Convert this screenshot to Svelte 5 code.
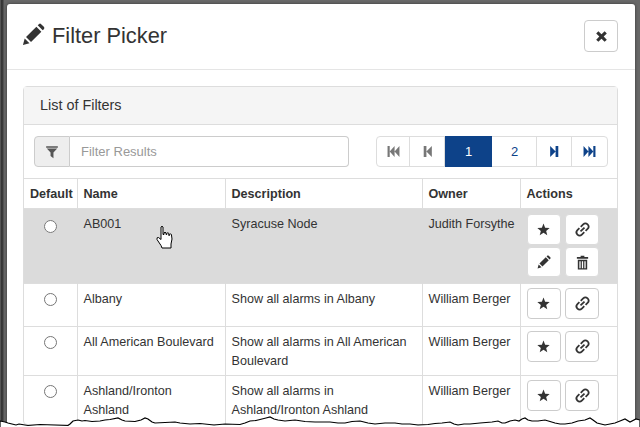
<script>
  const rows = [
    { name: 'AB001', desc: 'Syracuse Node', owner: 'Judith Forsythe', mine: true },
    { name: 'Albany', desc: 'Show all alarms in Albany', owner: 'William Berger' },
    { name: 'All American Boulevard', desc: 'Show all alarms in All American Boulevard', owner: 'William Berger' },
    { name: 'Ashland/Ironton Ashland', desc: 'Show all alarms in Ashland/Ironton Ashland', owner: 'William Berger' }
  ];

  const icons = {
    pencil: 'M1 23L2.8 16.2L7.8 21.2ZM4.2 14.6L15 3.8L20.2 9L9.4 19.8ZM16.4 2.4L17.6 1.2Q18.8 0 20 1.2L22.8 4Q24 5.2 22.8 6.4L21.6 7.6Z',
    filter: 'M2 2H22V4.5H2ZM3 6H21L14.5 13V22.5L9.5 19V13Z',
    close: 'M3.5 7L7 3.5L12 8.5L17 3.5L20.5 7L15.5 12L20.5 17L17 20.5L12 15.5L7 20.5L3.5 17L8.5 12Z',
    first: 'M1 2H5V22H1ZM5 12L14 2V22ZM14 12L23 2V22Z',
    prev: 'M5 2H10V22H5ZM10 12L20 2V22Z',
    next: 'M19 2H14V22H19ZM14 12L4 2V22Z',
    last: 'M23 2H19V22H23ZM19 12L10 2V22ZM10 12L1 2V22Z',
    star: 'M12 1L15 8.8L23.4 9.3L16.9 14.6L19 22.8L12 18.2L5 22.8L7.1 14.6L0.6 9.3L9 8.8Z',
    trash: 'M9 1H15V3H21V6H3V3H9ZM4.5 7.5H19.5V23H4.5ZM7 10V21H9V10ZM11 10V21H13V10ZM15 10V21H17V10Z'
  };
</script>

{#snippet icon(name, cls)}
  <svg class="icon {cls}" viewBox="0 0 24 24" aria-hidden="true">
    {#if name === 'link'}
      <g transform="rotate(-45 12 12)" fill="none" stroke="currentColor" stroke-width="2.8">
        <path d="M10 7H5.5a5 5 0 0 0 0 10H11" />
        <path d="M14 17H18.5a5 5 0 0 0 0-10H13" />
        <path d="M7.5 12H16.5" />
      </g>
    {:else}
      <path fill="currentColor" fill-rule="evenodd" d={icons[name]} />
    {/if}
  </svg>
{/snippet}

<div class="page">
  <div class="modal">
    <header class="modal-header">
      <h2 class="title">{@render icon('pencil', 'title-icon')}Filter Picker</h2>
      <button class="close">{@render icon('close', 'close-icon')}</button>
    </header>
    <div class="modal-body">
      <section class="panel">
        <div class="panel-heading">List of Filters</div>
        <div class="toolbar">
          <div class="search">
            <span class="addon">{@render icon('filter', 'filter-icon')}</span>
            <input type="text" placeholder="Filter Results" />
          </div>
          <div class="pager">
            <span class="pg w34 off">{@render icon('first', 'pg-wide')}</span>
            <span class="pg w35 off">{@render icon('prev', 'pg-icon')}</span>
            <span class="pg w47 active">1</span>
            <span class="pg w45">2</span>
            <span class="pg w35">{@render icon('next', 'pg-icon')}</span>
            <span class="pg w36">{@render icon('last', 'pg-wide')}</span>
          </div>
        </div>
        <table>
          <colgroup>
            <col style="width:53px" />
            <col style="width:148px" />
            <col style="width:197px" />
            <col style="width:98px" />
            <col style="width:98px" />
          </colgroup>
          <thead>
            <tr>
              <th>Default</th>
              <th>Name</th>
              <th>Description</th>
              <th>Owner</th>
              <th>Actions</th>
            </tr>
          </thead>
          <tbody>
            {#each rows as row}
              <tr class:selected={row.mine}>
                <td class="radio-cell"><input type="radio" name="default-filter" /></td>
                <td>{row.name}</td>
                <td>{row.desc}</td>
                <td class="owner">{row.owner}</td>
                <td class="actions-cell">
                  <div class="actions">
                    <button class="act">{@render icon('star', 'act-icon')}</button>
                    <button class="act">{@render icon('link', 'link-icon')}</button>
                    {#if row.mine}
                      <button class="act short">{@render icon('pencil', 'act-pencil')}</button>
                      <button class="act short">{@render icon('trash', 'act-trash')}</button>
                    {/if}
                  </div>
                </td>
              </tr>
            {/each}
          </tbody>
        </table>
      </section>
    </div>
  </div>

  <svg class="cursor" viewBox="0 0 17 24" aria-hidden="true">
    <path
      d="M5 2Q6 .5 7 2V9.5H8V7.8Q9 6.8 10 7.8V9.5H10.8V8.3Q11.8 7.3 12.8 8.3V10.5H13.4V9.4Q14.4 8.5 15.4 9.4L16 14L15 19V23H6L5 20.5L1 14.5Q.5 12 2.5 12.5L5 14.5Z"
      fill="#fff"
      stroke="#000"
      stroke-width="1"
      stroke-linejoin="round"
    />
  </svg>

  <svg class="tear" viewBox="0 0 640 427" aria-hidden="true">
    <path
      d="M0 421L5 422L8 423L12 424L16 425L19 424L22 424.5L28 425.5L40 424.5L68 425.5L70 424L73 421L78 420L82 421L85 420.5L92 421.5L100 421L105 420L110 419.5L118 418L122 420L125 421L135 421.5L141 420L145 418L148 419L152 422L155 423L175 422L180 423L190 424L200 423.5L214 425L225 424L240 424.5L245 423L250 421L256 420.5L262 419L266 418L270 417L274 419L278 420L285 421L295 420L305 421.5L315 422L330 422L338 423L345 423L352 421.5L360 421L368 423L375 424L385 423L395 423L402 424L410 424L418 425L428 424.5L435 423.5L442 423L450 422L454 424L458 425L464 424L470 424L480 423L492 422L498 421L502 423L505 423L510 421L515 420L519 421L522 419L525 418L528 420L532 421L538 421L545 420L550 421.5L555 423L560 424L565 424L572 423L578 421L585 420L590 418L593 420L597 423L605 425L610 424L615 423L620 421L625 419L630 422L636 419L640 420V428H0Z"
      fill="#fff"
      stroke="#000"
      stroke-width="1.2"
    />
  </svg>
</div>

<style>
  :global(body) {
    margin: 0;
  }
  .page {
    position: relative;
    width: 640px;
    height: 427px;
    overflow: hidden;
    box-sizing: border-box;
    padding: 4px 5px 0 7px;
    background-color: #5f5f5f;
    background-image: linear-gradient(90deg, #777 0, #333 1px, #3c3c3c 3px, #686868 4px);
    font-family: "Liberation Sans", Arial, sans-serif;
    font-size: 12.6px;
    line-height: 18.75px;
    color: #333;
  }
  .modal {
    background: #fff;
    border-radius: 3px 3px 0 0;
    box-shadow: 0 0 3px rgba(0, 0, 0, 0.5);
    height: 500px;
  }
  .modal-header {
    display: flex;
    justify-content: space-between;
    height: 65px;
    border-bottom: 1px solid #e5e5e5;
    padding-left: 16px;
    padding-right: 17px;
  }
  .title {
    display: flex;
    align-items: center;
    gap: 7px;
    margin: 0;
    height: 65px;
    font-size: 21.8px;
    font-weight: 400;
  }
  .title-icon {
    width: 23px;
    height: 23px;
    margin-left: -1px;
    margin-bottom: 5px;
  }
  .close {
    display: flex;
    align-items: center;
    justify-content: center;
    width: 34px;
    height: 32px;
    margin-top: 16px;
    padding: 0;
    background: #fff;
    border: 1px solid #ccc;
    border-radius: 4px;
    color: #333;
  }
  .close-icon {
    width: 15px;
    height: 15px;
  }
  .modal-body {
    padding: 16px 17px 0 16px;
  }
  .panel {
    border: 1px solid #ddd;
    border-radius: 4px;
  }
  .panel-heading {
    display: flex;
    align-items: center;
    height: 37px;
    padding-left: 16px;
    background: #f5f5f5;
    border-bottom: 1px solid #ddd;
    font-size: 14.4px;
  }
  .toolbar {
    display: flex;
    justify-content: space-between;
    padding: 11px 9px 11px 10px;
  }
  .search {
    display: flex;
    width: 315px;
    height: 31px;
  }
  .addon {
    display: flex;
    align-items: center;
    justify-content: center;
    width: 36px;
    box-sizing: border-box;
    background: #eee;
    border: 1px solid #ccc;
    border-radius: 4px 0 0 4px;
    color: #555;
  }
  .filter-icon {
    width: 14px;
    height: 14px;
  }
  input[type="text"] {
    flex: 1;
    min-width: 0;
    box-sizing: border-box;
    padding: 1px 11px 0;
    border: 1px solid #ccc;
    border-left: 0;
    border-radius: 0 4px 4px 0;
    font: inherit;
    font-size: 13px;
    color: #555;
    outline: none;
  }
  input[type="text"]::placeholder {
    color: #999;
    opacity: 1;
  }
  .pager {
    display: flex;
    height: 31px;
    box-sizing: border-box;
    border: 1px solid #ddd;
    border-radius: 4px;
  }
  .pg {
    display: flex;
    align-items: center;
    justify-content: center;
    box-sizing: border-box;
    color: #0d4289;
    font-size: 13px;
    border-right: 1px solid #ddd;
  }
  .pg:last-child {
    border-right: 0;
  }
  .off {
    color: #777;
  }
  .active {
    background: #0d4289;
    color: #fff;
    border-right: 0;
    margin: -1px 0;
  }
  .w34 { width: 33px; }
  .w35 { width: 35px; }
  .w36 { width: 35px; }
  .w47 { width: 47px; padding-top: 1px; }
  .w45 { width: 45px; padding-top: 1px; padding-left: 1px; }
  .pg-wide {
    width: 15px;
    height: 13px;
  }
  .pg-icon {
    width: 13px;
    height: 13px;
  }
  .icon {
    display: block;
    flex: none;
  }
  table {
    width: 100%;
    table-layout: fixed;
    border-collapse: collapse;
  }
  th,
  td {
    padding: 5.5px 6px 5px;
    border-top: 1px solid #ddd;
    border-left: 1px solid #ddd;
    text-align: left;
    vertical-align: top;
    font-weight: 400;
  }
  th {
    font-weight: 700;
  }
  th:first-child,
  td:first-child {
    border-left: 0;
  }
  .selected td {
    background: #dbdbdb;
    border-left-color: #dbdbdb;
    height: 63.5px;
  }
  .owner {
    padding-right: 0;
    white-space: nowrap;
  }
  .radio-cell {
    text-align: center;
  }
  .radio-cell input {
    margin: 3.5px 0 0;
    width: 13px;
    height: 13px;
  }
  .selected .radio-cell input {
    margin-top: 5px;
  }
  .actions-cell {
    padding: 4px 0 7px 6px;
  }
  .selected .actions-cell {
    padding: 5px 0 0 6px;
  }
  .actions {
    display: flex;
    flex-wrap: wrap;
    gap: 2px 4.5px;
    width: 76px;
  }
  .act {
    display: flex;
    align-items: center;
    justify-content: center;
    width: 34px;
    height: 31px;
    padding: 0;
    background: #fff;
    border: 1px solid #ccc;
    border-radius: 4px;
    color: #333;
  }
  .short {
    height: 30px;
  }
  .selected .act {
    border-color: #dbdbdb;
  }
  .act-icon {
    width: 13px;
    height: 13px;
  }
  .act-pencil {
    width: 14px;
    height: 14px;
  }
  .act-trash {
    width: 15px;
    height: 15px;
  }
  .link-icon {
    width: 15px;
    height: 15px;
  }
  .cursor {
    position: absolute;
    left: 156px;
    top: 225px;
    width: 17px;
    height: 24px;
  }
  .tear {
    position: absolute;
    left: 0;
    top: 0;
    width: 640px;
    height: 427px;
  }
</style>
